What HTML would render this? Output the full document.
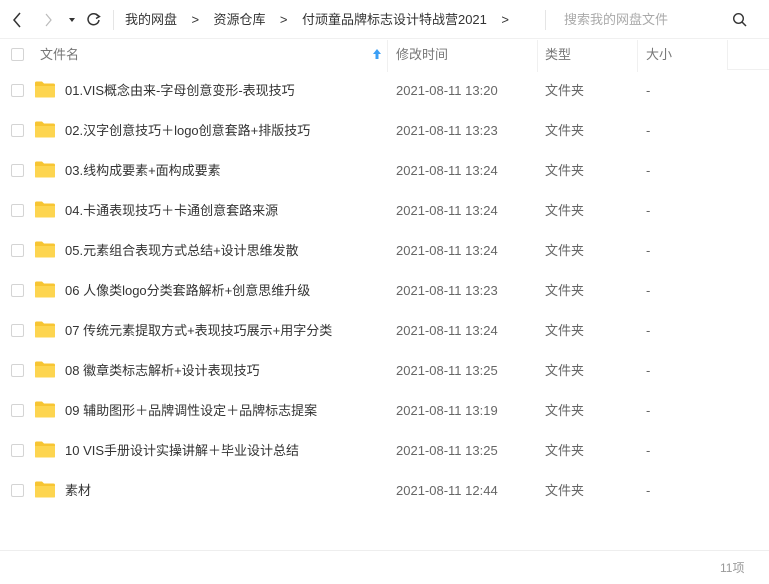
<!DOCTYPE html>
<html><head><meta charset="utf-8"><style>
*{margin:0;padding:0;box-sizing:border-box}
body{width:769px;height:584px;background:#fff;font-family:"Liberation Sans","Noto Sans CJK SC",sans-serif;color:#333;font-size:13px;position:relative;overflow:hidden}
.a{position:absolute;white-space:nowrap;line-height:16px}
.cb{position:absolute;left:11px;width:13px;height:13px;border:1px solid #d4d4d4;border-radius:2px;background:#fff}
.fold{position:absolute;left:34px;width:22px;height:17px}
.g{color:#666}
</style></head><body>
<svg class="a" style="left:10px;top:10px" width="100" height="20" viewBox="0 0 100 20">
<path d="M10 3 L4 10 L10 17" fill="none" stroke="#333" stroke-width="1.5"/>
<path d="M36 4 L41 10 L36 16" fill="none" stroke="#bbb" stroke-width="1.2"/>
<path d="M59 8 L65 8 L62 12 Z" fill="#333"/>
<path d="M88 6 A5.5 5.5 0 1 0 89 10" fill="none" stroke="#333" stroke-width="1.5"/>
<path d="M86 4 L89.5 6.5 L86 8.5" fill="none" stroke="#333" stroke-width="1.4"/>
</svg>
<div class="a" style="left:113px;top:10px;width:1px;height:20px;background:#e5e5e5"></div>
<div class="a" style="left:125px;top:12px;font-size:13px;color:#333">我的网盘&nbsp;&nbsp;&nbsp;&nbsp;&gt;&nbsp;&nbsp;&nbsp;&nbsp;资源仓库&nbsp;&nbsp;&nbsp;&nbsp;&gt;&nbsp;&nbsp;&nbsp;&nbsp;付顽童品牌标志设计特战营2021&nbsp;&nbsp;&nbsp;&nbsp;&gt;</div>
<div class="a" style="left:545px;top:10px;width:1px;height:20px;background:#e5e5e5"></div>
<div class="a" style="left:564px;top:12px;color:#aaa">搜索我的网盘文件</div>
<svg class="a" style="left:732px;top:12px" width="16" height="16" viewBox="0 0 16 16"><circle cx="6.5" cy="6.5" r="4.8" fill="none" stroke="#333" stroke-width="1.4"/><path d="M10 10 L14 14" stroke="#333" stroke-width="1.5"/></svg>
<div class="a" style="left:0;top:38px;width:769px;height:1px;background:#f0f0f0"></div>
<div class="cb" style="top:48px"></div>
<div class="a g" style="left:40px;top:47px;color:#777">文件名</div>
<svg class="a" style="left:372px;top:48px" width="10" height="12" viewBox="0 0 10 12"><path d="M5 1 L1 6 H3.5 V11 H6.5 V6 H9 Z" fill="#3b9ff5"/></svg>
<div class="a" style="left:387px;top:40px;width:1px;height:32px;background:#f0f0f0"></div>
<div class="a" style="left:396px;top:47px;color:#777">修改时间</div>
<div class="a" style="left:537px;top:40px;width:1px;height:32px;background:#f0f0f0"></div>
<div class="a" style="left:545px;top:47px;color:#777">类型</div>
<div class="a" style="left:637px;top:40px;width:1px;height:32px;background:#f0f0f0"></div>
<div class="a" style="left:646px;top:47px;color:#777">大小</div>
<div class="a" style="left:727px;top:40px;width:42px;height:30px;border-left:1px solid #f0f0f0;border-bottom:1px solid #f0f0f0"></div>
<div id="rows"></div>
<div class="a" style="left:0;top:550px;width:769px;height:1px;background:#eee"></div>
<div class="a" style="left:720px;top:560px;color:#999;font-size:12px">11项</div>
<script>
var d=[["01.VIS概念由来-字母创意变形-表现技巧","13:20"],["02.汉字创意技巧＋logo创意套路+排版技巧","13:23"],["03.线构成要素+面构成要素","13:24"],["04.卡通表现技巧＋卡通创意套路来源","13:24"],["05.元素组合表现方式总结+设计思维发散","13:24"],["06 人像类logo分类套路解析+创意思维升级","13:23"],["07 传统元素提取方式+表现技巧展示+用字分类","13:24"],["08 徽章类标志解析+设计表现技巧","13:25"],["09 辅助图形＋品牌调性设定＋品牌标志提案","13:19"],["10 VIS手册设计实操讲解＋毕业设计总结","13:25"],["素材","12:44"]];
var h="";
d.forEach(function(r,i){var y=90+i*40;
h+='<div class="cb" style="top:'+(y-6)+'px"></div>';
h+='<svg class="fold" style="top:'+(y-9)+'px" viewBox="0 0 22 17"><path d="M1 2 Q1 0.5 2.5 0.5 H8 L10 2.5 H19.5 Q21 2.5 21 4 V15.5 Q21 16.5 20 16.5 H2 Q1 16.5 1 15.5 Z" fill="#f7c533"/><path d="M1 5 H21 V15.5 Q21 16.5 20 16.5 H2 Q1 16.5 1 15.5 Z" fill="#fdd550"/></svg>';
h+='<div class="a" style="left:65px;top:'+(y-7)+'px">'+r[0]+'</div>';
h+='<div class="a g" style="left:396px;top:'+(y-7)+'px">2021-08-11 '+r[1]+'</div>';
h+='<div class="a g" style="left:545px;top:'+(y-7)+'px">文件夹</div>';
h+='<div class="a g" style="left:646px;top:'+(y-7)+'px">-</div>';});
document.getElementById("rows").innerHTML=h;
</script>
</body></html>
